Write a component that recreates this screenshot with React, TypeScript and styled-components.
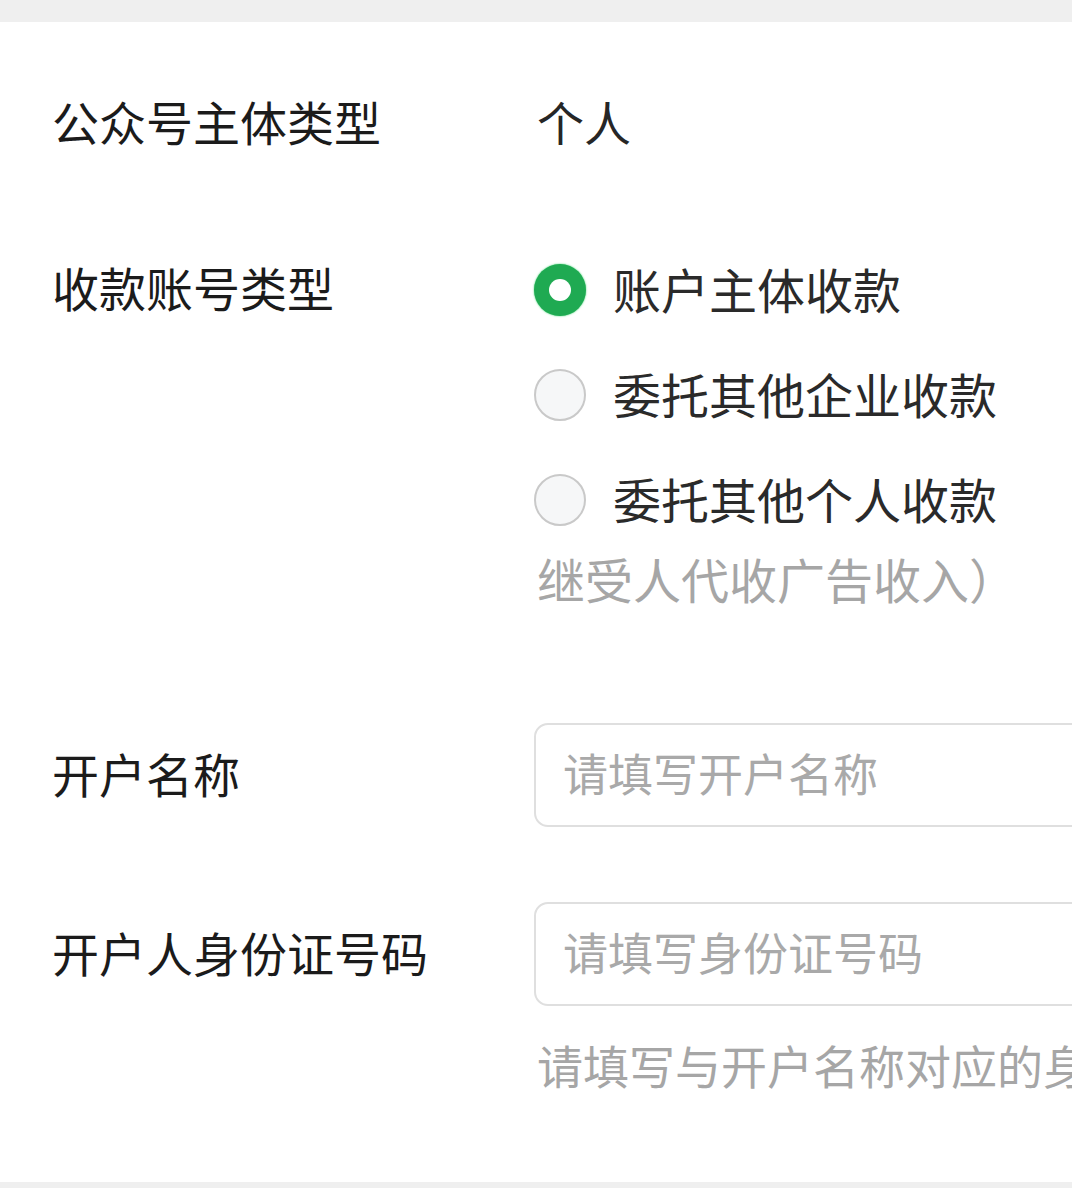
import * as React from "react";
import styled, { createGlobalStyle } from "styled-components";

const GlobalStyle = createGlobalStyle`
  html, body {
    margin: 0;
    padding: 0;
    background: #ffffff;
  }
  body {
    font-family: "Noto Sans CJK SC", "Noto Sans", sans-serif;
    overflow: hidden;
  }
`;

const SPage = styled.div`
  width: 1072px;
  height: 1188px;
  overflow: hidden;
  display: flex;
  flex-direction: column;
  background: #ffffff;
`;

const SGrayBar = styled.div<{ h: number }>`
  height: ${({ h }) => h}px;
  flex-shrink: 0;
  background: #efefef;
`;

const SForm = styled.div`
  flex: 1;
  display: flex;
  flex-direction: column;
  padding: 65px 0 0 52px;
`;

interface IRowProps {
  gap?: number;
}

const SRow = styled.div<IRowProps>`
  display: grid;
  grid-template-columns: 482px 1fr;
  align-items: start;
  margin-top: ${({ gap }) => gap || 0}px;
`;

const SLabel = styled.div<{ lh: number }>`
  font-size: 47px;
  line-height: ${({ lh }) => lh}px;
  color: #1b1b1b;
  white-space: nowrap;
`;

const SValue = styled.div`
  font-size: 47px;
  line-height: 68px;
  color: #262626;
  padding-left: 3px;
`;

const SOptions = styled.div`
  display: flex;
  flex-direction: column;
`;

const SOption = styled.label`
  display: flex;
  align-items: center;
  height: 105px;
  gap: 27px;
  font-size: 48px;
  color: #2a2a2a;
  white-space: nowrap;
`;

const SOptionText = styled.span`
  padding-bottom: 4px;
`;

const SRadio = styled.span<{ checked: boolean }>`
  width: 52px;
  height: 52px;
  flex-shrink: 0;
  box-sizing: border-box;
  border-radius: 50%;
  display: flex;
  align-items: center;
  justify-content: center;
  background: ${({ checked }) => (checked ? "#1faa52" : "#f6f7f8")};
  border: ${({ checked }) => (checked ? "none" : "2.5px solid #c9c9c9")};
  box-shadow: ${({ checked }) => (checked ? "0 0 2px #3ad26b" : "none")};
  &::after {
    content: "";
    display: ${({ checked }) => (checked ? "block" : "none")};
    width: 22px;
    height: 22px;
    border-radius: 50%;
    background: #ffffff;
  }
`;

const SHint = styled.div<{ size: number; lh: number; mt?: number }>`
  font-size: ${({ size }) => size}px;
  line-height: ${({ lh }) => lh}px;
  margin-top: ${({ mt }) => mt || 0}px;
  padding-left: 3px;
  color: #a6a6a6;
  white-space: nowrap;
`;

const SInputWrap = styled.div`
  display: flex;
  flex-direction: column;
`;

const SInput = styled.input`
  width: 720px;
  height: 104px;
  box-sizing: border-box;
  border: 2px solid #dfdfdf;
  border-radius: 14px;
  padding: 0 0 6px 27px;
  font-family: inherit;
  font-size: 45px;
  color: #222;
  background: #ffffff;
  outline: none;
  &::placeholder {
    color: #a9a9a9;
  }
`;

const SLabelCell = styled.div`
  display: flex;
  align-items: center;
  height: 104px;
  padding-bottom: 5px;
  box-sizing: border-box;
`;

const SSpacer = styled.div`
  flex: 1;
`;

const options = ["账户主体收款", "委托其他企业收款", "委托其他个人收款"];

const App = () => {
  const [selected, setSelected] = React.useState(0);

  return (
    <SPage>
      <GlobalStyle />
      <SGrayBar h={22} />
      <SForm>
        <SRow>
          <SLabel lh={68}>公众号主体类型</SLabel>
          <SValue>个人</SValue>
        </SRow>

        <SRow gap={82}>
          <SLabel lh={100}>收款账号类型</SLabel>
          <SOptions>
            {options.map((text, i) => (
              <SOption key={text} onClick={() => setSelected(i)}>
                <SRadio checked={selected === i} />
                <SOptionText>{text}</SOptionText>
              </SOption>
            ))}
            <SHint size={48} lh={52}>继受人代收广告收入）</SHint>
          </SOptions>
        </SRow>

        <SRow gap={119}>
          <SLabelCell>
            <SLabel lh={68}>开户名称</SLabel>
          </SLabelCell>
          <SInputWrap>
            <SInput placeholder="请填写开户名称" />
          </SInputWrap>
        </SRow>

        <SRow gap={75}>
          <SLabelCell>
            <SLabel lh={68}>开户人身份证号码</SLabel>
          </SLabelCell>
          <SInputWrap>
            <SInput placeholder="请填写身份证号码" />
            <SHint size={46} lh={60} mt={28}>
              请填写与开户名称对应的身份证号码
            </SHint>
          </SInputWrap>
        </SRow>
        <SSpacer />
      </SForm>
      <SGrayBar h={6} />
    </SPage>
  );
};

export default App;
